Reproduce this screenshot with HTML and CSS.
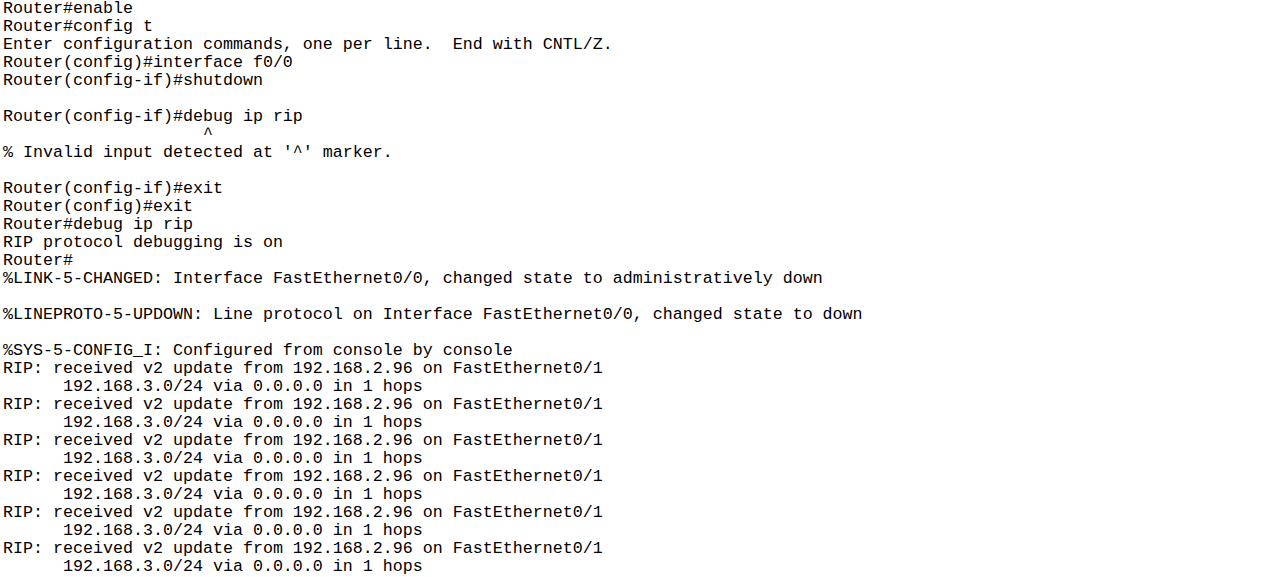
FILE: index.html
```html
<!DOCTYPE html>
<html>
<head>
<meta charset="utf-8">
<link rel="stylesheet" href="styles.css">
</head>
<body>
<pre class="console">Router#enable
Router#config t
Enter configuration commands, one per line.  End with CNTL/Z.
Router(config)#interface f0/0
Router(config-if)#shutdown

Router(config-if)#debug ip rip
                    ^
% Invalid input detected at '^' marker.

Router(config-if)#exit
Router(config)#exit
Router#debug ip rip
RIP protocol debugging is on
Router#
%LINK-5-CHANGED: Interface FastEthernet0/0, changed state to administratively down

%LINEPROTO-5-UPDOWN: Line protocol on Interface FastEthernet0/0, changed state to down

%SYS-5-CONFIG_I: Configured from console by console
RIP: received v2 update from 192.168.2.96 on FastEthernet0/1
      192.168.3.0/24 via 0.0.0.0 in 1 hops
RIP: received v2 update from 192.168.2.96 on FastEthernet0/1
      192.168.3.0/24 via 0.0.0.0 in 1 hops
RIP: received v2 update from 192.168.2.96 on FastEthernet0/1
      192.168.3.0/24 via 0.0.0.0 in 1 hops
RIP: received v2 update from 192.168.2.96 on FastEthernet0/1
      192.168.3.0/24 via 0.0.0.0 in 1 hops
RIP: received v2 update from 192.168.2.96 on FastEthernet0/1
      192.168.3.0/24 via 0.0.0.0 in 1 hops
RIP: received v2 update from 192.168.2.96 on FastEthernet0/1
      192.168.3.0/24 via 0.0.0.0 in 1 hops</pre>
</body>
</html>
```

FILE: styles.css
```css
html, body {
  margin: 0;
  padding: 0;
  background: #ffffff;
  overflow: hidden;
}
.console {
  margin: 0;
  padding: 0 0 0 3px;
  font-family: "Liberation Mono", "Courier New", monospace;
  font-size: 16.6667px;
  line-height: 18px;
  color: #000000;
  white-space: pre;
}
```
